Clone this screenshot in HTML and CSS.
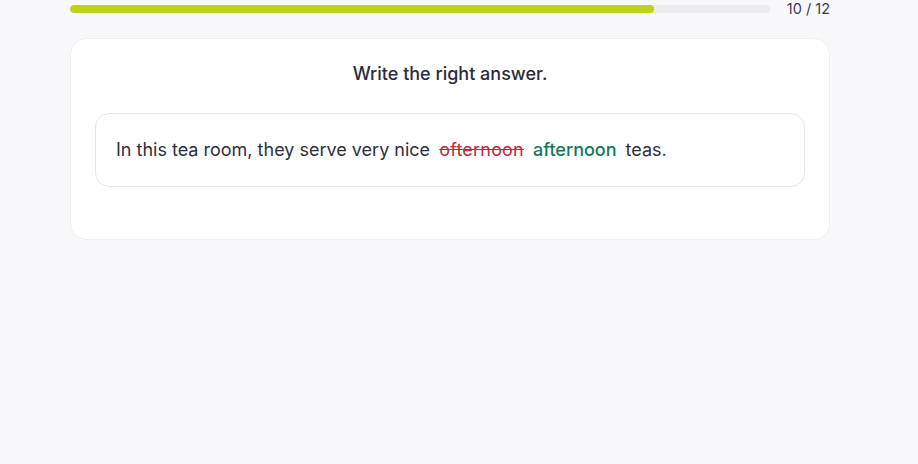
FILE: index.html
```html
<!DOCTYPE html>
<html lang="en">
<head>
<meta charset="utf-8">
<title>Exercise</title>
<link rel="stylesheet" href="styles.css">
</head>
<body>
<div class="page">
  <div class="progress-row">
    <div class="track"><div class="fill" style="width: 83.4%"></div></div>
    <span class="count">10 / 12</span>
  </div>
  <section class="card">
    <h1 class="title">Write the right answer.</h1>
    <div class="answer-box">
      <p class="sentence">In this tea room, they serve very nice <span class="wrong">ofternoon</span> <span class="right">afternoon</span> teas.</p>
    </div>
  </section>
</div>
</body>
</html>
```
FILE: styles.css
```css
html, body {
  margin: 0;
  padding: 0;
  background: #f8f8fa;
  font-family: Inter, "Noto Sans", sans-serif;
  color: #2b2b3a;
}
.page {
  width: 760px;
  margin-left: 70px;
}
.progress-row {
  display: flex;
  align-items: center;
  height: 17px;
}
.track {
  width: 700px;
  height: 8px;
  border-radius: 4px;
  background: #ebebee;
  overflow: hidden;
}
.fill {
  height: 100%;
  border-radius: 4px;
  background: #bdd31a;
}
.count {
  margin-left: auto;
  font-size: 14.5px;
  color: #3b3a52;
  white-space: nowrap;
}
.card {
  margin-top: 21px;
  background: #fff;
  border: 1px solid #efeff2;
  border-radius: 16px;
  padding: 23px 24px 52px;
}
.title {
  margin: 0 0 27px;
  text-align: center;
  font-size: 18px;
  line-height: 24px;
  font-weight: 500;
  color: #2b2b3a;
}
.answer-box {
  border: 1px solid #e6e6ea;
  border-radius: 14px;
  padding: 23px 20px;
}
.sentence {
  margin: 0;
  font-size: 18px;
  line-height: 26px;
  color: #2f2f3e;
}
.wrong {
  color: #c8243c;
  text-decoration: line-through;
  letter-spacing: 0.2px;
  margin: 0 4px 0 4px;
}
.right {
  color: #0e7b5c;
  font-weight: 500;
  margin-right: 4px;
}
```
